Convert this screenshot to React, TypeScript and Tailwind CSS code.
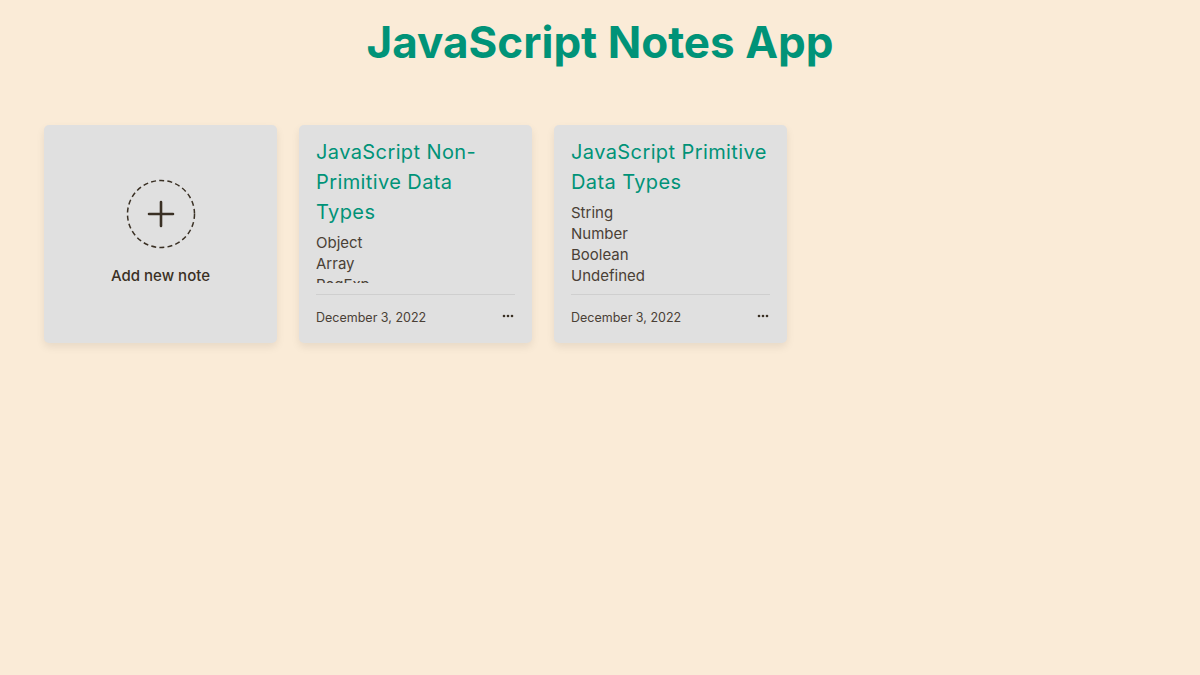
import React from 'react'

interface Note {
  id: number
  title: string
  lines: string[]
  date: string
}

const notes: Note[] = [
  {
    id: 1,
    title: 'JavaScript Non-Primitive Data Types',
    lines: ['Object', 'Array', 'RegExp'],
    date: 'December 3, 2022',
  },
  {
    id: 2,
    title: 'JavaScript Primitive Data Types',
    lines: ['String', 'Number', 'Boolean', 'Undefined'],
    date: 'December 3, 2022',
  },
]

function AddNoteCard() {
  return (
    <div className="w-[233px] h-[218px] bg-[#e0e0e0] rounded-[5px] shadow-[0_4px_8px_rgba(0,0,0,0.08)] flex flex-col items-center justify-center cursor-pointer">
      <svg width="70" height="70" viewBox="0 0 70 70" fill="none" stroke="#3a3024" className="-mt-[2px]">
        <circle cx="35" cy="35" r="33.5" strokeWidth="1.5" strokeDasharray="5 3.2" />
        <path d="M35 23v24M23 35h24" strokeWidth="2.6" strokeLinecap="round" />
      </svg>
      <p className="mt-[16px] text-[15px] font-medium text-[#3a3024]">Add new note</p>
    </div>
  )
}

function NoteCard({ note }: { note: Note }) {
  return (
    <div className="w-[233px] h-[218px] bg-[#e0e0e0] rounded-[5px] shadow-[0_4px_8px_rgba(0,0,0,0.08)] px-[17px] pt-[12px] flex flex-col">
      <div className="h-[146px] overflow-hidden">
        <h2 className="text-[20px] leading-[30px] tracking-[0.4px] text-[#009378]">{note.title}</h2>
        <div className="mt-[5px] text-[15px] leading-[21px] text-[#4a4036]">
          {note.lines.map((l) => (
            <p key={l}>{l}</p>
          ))}
        </div>
      </div>
      <div className="mt-[11px] border-t border-[#cfcfcf] flex items-center justify-between h-[45px]">
        <span className="text-[12.5px] text-[#4a4036] mt-[2px]">{note.date}</span>
        <svg width="12" height="4" viewBox="0 0 12 4" fill="#3a3024" className="mr-[1px] -mt-[2px]">
          <circle cx="2" cy="2" r="1.3" />
          <circle cx="6" cy="2" r="1.3" />
          <circle cx="10" cy="2" r="1.3" />
        </svg>
      </div>
    </div>
  )
}

export default function App() {
  return (
    <div className="min-h-[675px] bg-[#faebd7] font-['Inter','Noto_Sans',sans-serif]">
      <h1 className="pt-[14px] text-center text-[44px] leading-[56px] font-bold text-[#009378]">
        JavaScript Notes App
      </h1>
      <div className="mt-[55px] pl-[44px] flex gap-[22px]">
        <AddNoteCard />
        {notes.map((n) => (
          <NoteCard key={n.id} note={n} />
        ))}
      </div>
    </div>
  )
}
